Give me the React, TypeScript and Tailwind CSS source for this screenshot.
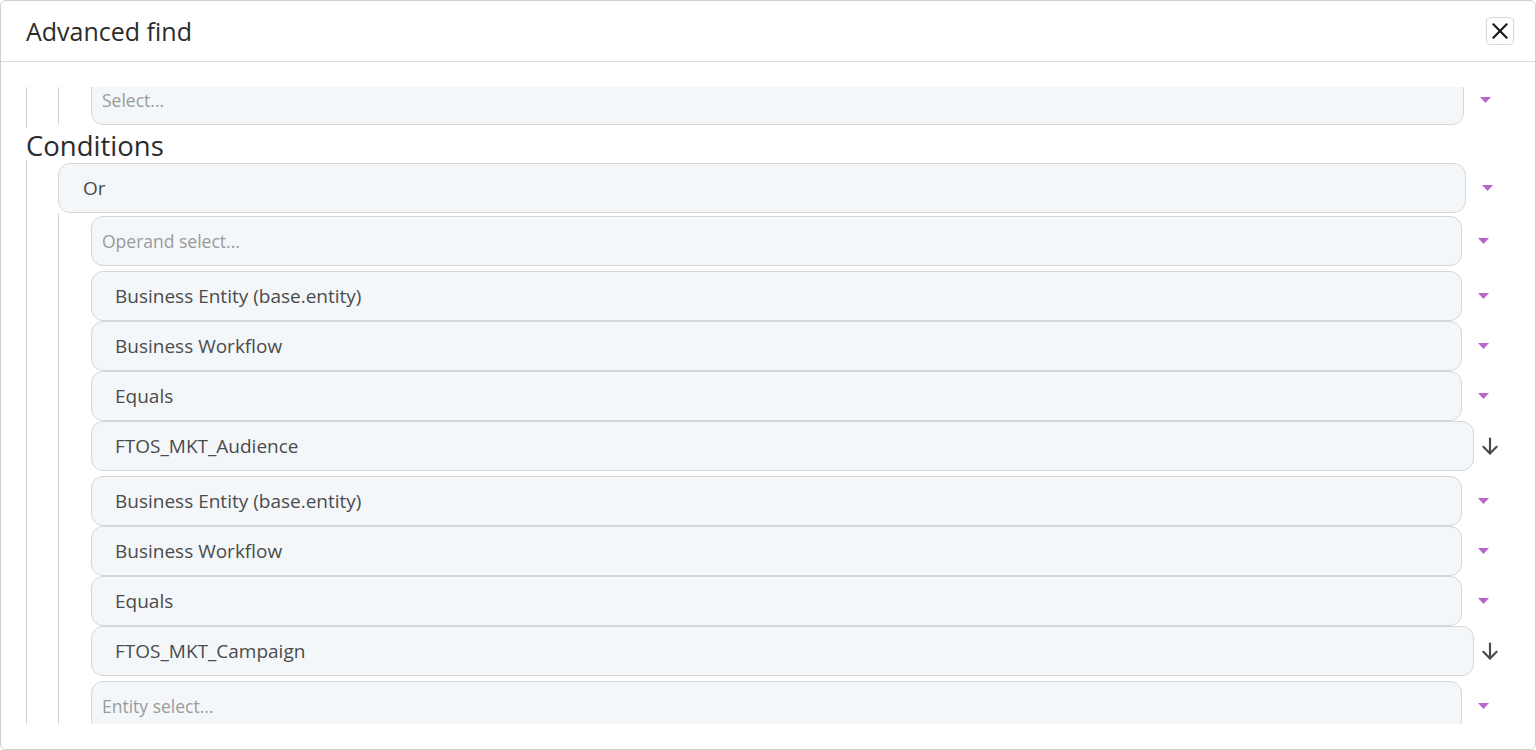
import React from "react";

const font = { fontFamily: '"Open Sans", "Noto Sans", sans-serif' };

function Caret() {
  return (
    <svg width="11" height="6" viewBox="0 0 11 6">
      <polygon points="0,0 11,0 5.5,6" fill="#b866cc" />
    </svg>
  );
}

function ArrowDown() {
  return (
    <svg width="20" height="20" viewBox="0 0 24 24" fill="none" stroke="#4a4a4a" strokeWidth="2.6" strokeLinecap="round" strokeLinejoin="round">
      <path d="M12 3v18" />
      <path d="M20 13l-8 8-8-8" />
    </svg>
  );
}

function SelectRow({
  text,
  placeholder,
  pad = "pl-[23px]",
  arrowW = "w-[47px]",
  kind = "caret",
  extra = "",
}: {
  text: string;
  placeholder?: boolean;
  pad?: string;
  arrowW?: string;
  kind?: "caret" | "arrow";
  extra?: string;
}) {
  return (
    <div className={`flex items-stretch h-[50px] ${extra}`}>
      <div
        className={`flex-1 flex items-center bg-[#f4f7fa] border border-[#d6d6d6] rounded-[12px] ${pad} ${
          placeholder ? "text-[#9a9a9a] text-[17.5px]" : "text-[#4b4b4b] text-[19px]"
        }`}
      >
        {text}
      </div>
      <div className={`${arrowW} flex items-center justify-start shrink-0 ${kind === "caret" ? "pl-[16px]" : "pl-[6px]"}`}>
        {kind === "caret" ? <Caret /> : <ArrowDown />}
      </div>
    </div>
  );
}

function Group({ a, b, c, d }: { a: string; b: string; c: string; d: string }) {
  return (
    <div className="mt-[5px] flex flex-col">
      <SelectRow text={a} />
      <SelectRow text={b} />
      <SelectRow text={c} />
      <SelectRow text={d} arrowW="w-[35px]" kind="arrow" />
    </div>
  );
}

export default function App() {
  return (
    <div style={font} className="w-[1536px] h-[750px] bg-white">
      <div className="w-full h-full border border-[#cfcfcf] rounded-[6px] flex flex-col overflow-hidden">
        <div className="h-[61px] shrink-0 flex items-center justify-between pl-[25px] pr-[21px] border-b border-[#dcdcdc]">
          <div className="text-[25px] text-[#2b2b2b] leading-none">Advanced find</div>
          <div className="w-[28px] h-[28px] border border-[#d8d8d8] rounded-[4px] flex items-center justify-center">
            <svg width="20" height="20" viewBox="0 0 24 24" fill="none" stroke="#1a1a1a" strokeWidth="2.6" strokeLinecap="round">
              <path d="M4 4l16 16M20 4L4 20" />
            </svg>
          </div>
        </div>
        <div className="flex-1 pt-[25px] pb-[25px] pl-[25px] pr-[24px] min-h-0">
          <div className="h-full overflow-hidden">
            <div className="-mt-[12px]">
              <div className="border-l border-[#d4d4d4] pb-[3px]">
                <div className="ml-[31px] border-l border-[#d4d4d4] pl-[32px]">
                  <SelectRow text="Select..." placeholder pad="pl-[10px]" />
                </div>
              </div>
              <div className="text-[27.5px] pt-[4px] leading-[28px] text-[#2b2b2b]">Conditions</div>
              <div className="border-l border-[#d4d4d4] pt-[3px] pl-[31px]">
                <SelectRow text="Or" pad="pl-[24px]" arrowW="w-[45px]" />
                <div className="border-l border-[#d4d4d4] pl-[32px] pt-[3px] pr-[2px]">
                  <SelectRow text="Operand select..." placeholder pad="pl-[10px]" />
                  <Group
                    a="Business Entity (base.entity)"
                    b="Business Workflow"
                    c="Equals"
                    d="FTOS_MKT_Audience"
                  />
                  <Group
                    a="Business Entity (base.entity)"
                    b="Business Workflow"
                    c="Equals"
                    d="FTOS_MKT_Campaign"
                  />
                  <SelectRow text="Entity select..." placeholder pad="pl-[10px]" extra="mt-[5px]" />
                  <div className="h-[40px]" />
                </div>
              </div>
            </div>
          </div>
        </div>
      </div>
    </div>
  );
}
